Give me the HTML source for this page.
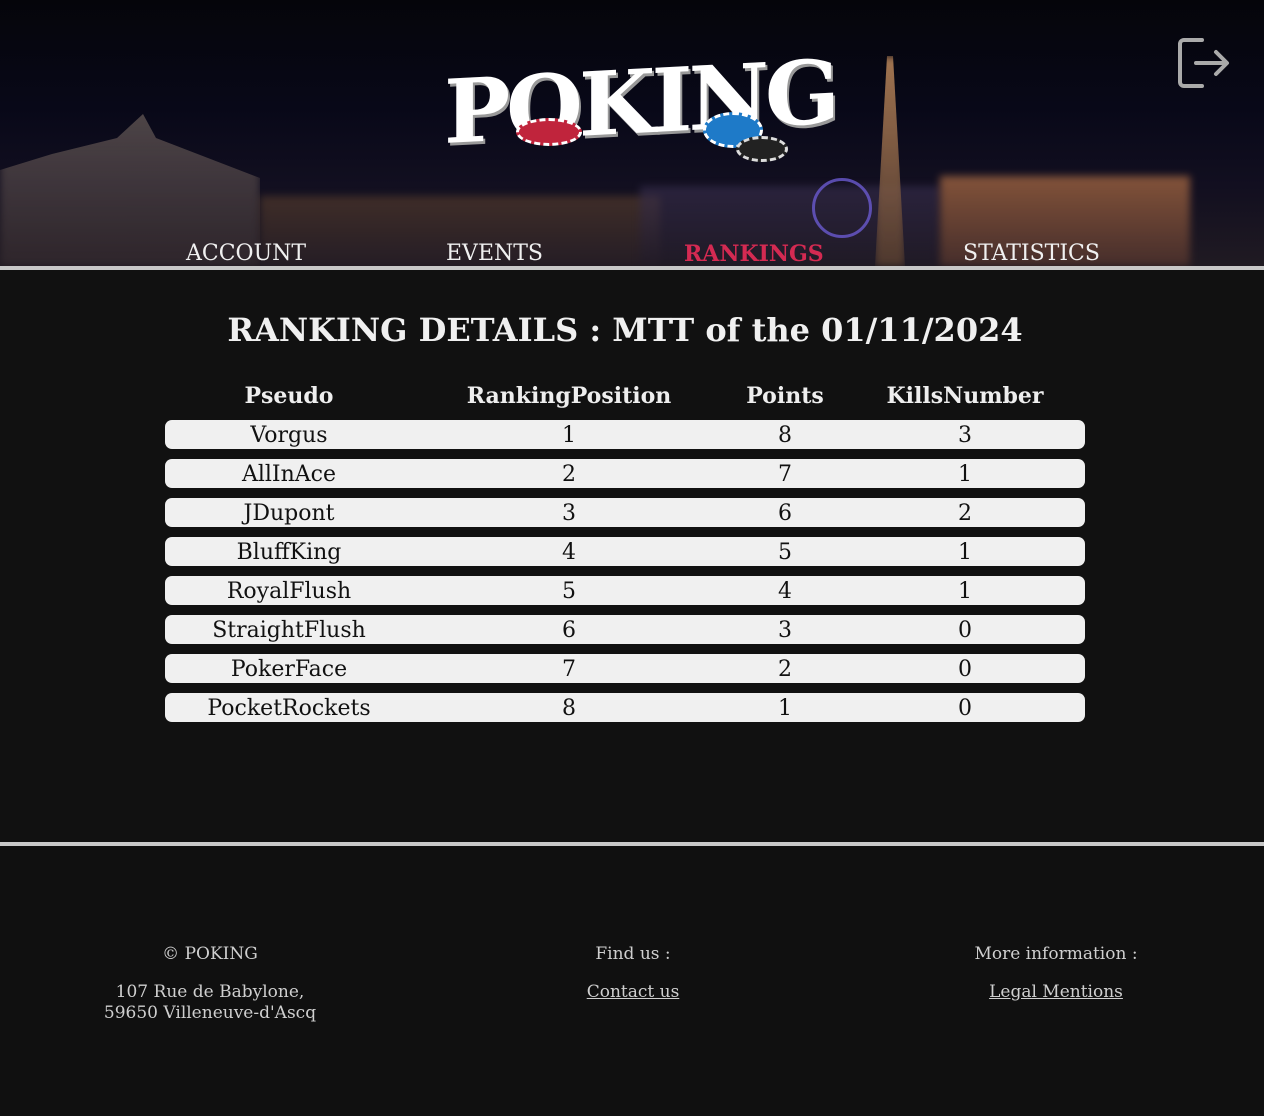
<!DOCTYPE html>
<html><head><meta charset="utf-8"><style>
*{margin:0;padding:0;box-sizing:border-box}
body{width:1264px;height:1116px;background:#101010;font-family:"DejaVu Serif","Liberation Serif",serif;color:#eee;overflow:hidden;position:relative}
header{position:absolute;left:0;top:0;width:1264px;height:266px;overflow:hidden;
background:linear-gradient(180deg,#05050a 0%,#080818 40%,#120f20 70%,#201a22 100%)}
.city{position:absolute;bottom:0;height:150px;filter:blur(4px)}
.line1{position:absolute;left:0;top:266px;width:1264px;height:4px;background:#c8c8c8}
.line2{position:absolute;left:0;top:842px;width:1264px;height:4px;background:#c8c8c8}
main{position:absolute;left:0;top:270px;width:1264px;height:572px;background:#111}
nav a{position:absolute;top:241px;font-size:22px;color:#f0f0f0;text-decoration:none}
h1{position:absolute;top:311px;left:-7px;width:1264px;text-align:center;font-size:32px;font-weight:bold;color:#f0f0f0}
.th{position:absolute;top:383px;font-size:22px;font-weight:bold;transform:translateX(-50%);white-space:nowrap}
.row{position:absolute;left:165px;width:920px;height:29px;background:#f0f0f0;border-radius:7px;color:#111;font-size:22px}
.row span{position:absolute;top:1px;line-height:29px;transform:translateX(-50%);white-space:nowrap}
.f{position:absolute;font-size:17px;color:#cfcfcf;text-align:center;transform:translateX(-50%);white-space:nowrap;line-height:21px}
.f a{color:#cfcfcf;text-decoration:underline}
</style></head><body>
<header>
<div class="city" style="left:0;width:260px;height:160px;background:linear-gradient(180deg,#8a7a70,#3a2f33);opacity:.55;clip-path:polygon(0 40%,20% 30%,45% 20%,55% 5%,60% 20%,100% 45%,100% 100%,0 100%)"></div>
<div class="city" style="left:260px;width:400px;height:70px;background:linear-gradient(180deg,#6a4a30,#2a2028);opacity:.5"></div>
<div class="city" style="left:640px;width:300px;height:80px;background:linear-gradient(180deg,#3a3050,#201a28);opacity:.6"></div>
<div class="city" style="left:875px;width:30px;height:210px;background:linear-gradient(180deg,#c89060,#5a4030);opacity:.8;clip-path:polygon(40% 0,60% 0,100% 100%,0 100%)"></div>
<div style="position:absolute;left:812px;top:178px;width:60px;height:60px;border:3px solid #6a5ad0;border-radius:50%;opacity:.8"></div>
<div class="city" style="left:940px;width:250px;height:90px;background:linear-gradient(180deg,#c07848,#5a3830);opacity:.65"></div>
<div style="position:absolute;left:444px;top:52px;width:380px;height:100px;font-family:'DejaVu Serif',serif;font-weight:bold;font-size:88px;color:#fff;letter-spacing:-4px;line-height:100px;text-shadow:2px 3px 0 #999;transform:skewY(-3deg)">POKING</div>
<div style="position:absolute;left:516px;top:118px;width:66px;height:28px;border-radius:50%;background:#c0243c;border:3px dashed #fff"></div>
<div style="position:absolute;left:703px;top:112px;width:60px;height:36px;border-radius:50%;background:#1e7ac8;border:3px dashed #fff"></div>
<div style="position:absolute;left:736px;top:136px;width:52px;height:26px;border-radius:50%;background:#222;border:3px dashed #ddd"></div>
<svg style="position:absolute;left:1176px;top:36px" width="54" height="54" viewBox="0 0 54 54" fill="none" stroke="#aaa" stroke-width="4" stroke-linecap="round" stroke-linejoin="round"><path d="M26 4H8a4 4 0 0 0-4 4v38a4 4 0 0 0 4 4h18"/><path d="M20 27h30M40 16l11 11-11 11"/></svg>
<nav><a style="left:186px">ACCOUNT</a><a style="left:446px">EVENTS</a><a style="left:684px;color:#d42a52;font-weight:bold">RANKINGS</a><a style="left:963px">STATISTICS</a></nav>
</header>
<div class="line1"></div>
<main></main>
<h1>RANKING DETAILS : MTT of the 01/11/2024</h1>
<div class="th" style="left:289px">Pseudo</div>
<div class="th" style="left:569px">RankingPosition</div>
<div class="th" style="left:785px">Points</div>
<div class="th" style="left:965px">KillsNumber</div>
<div class="row" style="top:420px"><span style="left:124px">Vorgus</span><span style="left:404px">1</span><span style="left:620px">8</span><span style="left:800px">3</span></div>
<div class="row" style="top:459px"><span style="left:124px">AllInAce</span><span style="left:404px">2</span><span style="left:620px">7</span><span style="left:800px">1</span></div>
<div class="row" style="top:498px"><span style="left:124px">JDupont</span><span style="left:404px">3</span><span style="left:620px">6</span><span style="left:800px">2</span></div>
<div class="row" style="top:537px"><span style="left:124px">BluffKing</span><span style="left:404px">4</span><span style="left:620px">5</span><span style="left:800px">1</span></div>
<div class="row" style="top:576px"><span style="left:124px">RoyalFlush</span><span style="left:404px">5</span><span style="left:620px">4</span><span style="left:800px">1</span></div>
<div class="row" style="top:615px"><span style="left:124px">StraightFlush</span><span style="left:404px">6</span><span style="left:620px">3</span><span style="left:800px">0</span></div>
<div class="row" style="top:654px"><span style="left:124px">PokerFace</span><span style="left:404px">7</span><span style="left:620px">2</span><span style="left:800px">0</span></div>
<div class="row" style="top:693px"><span style="left:124px">PocketRockets</span><span style="left:404px">8</span><span style="left:620px">1</span><span style="left:800px">0</span></div>
<div class="line2"></div>
<div class="f" style="left:210px;top:944px">© POKING</div>
<div class="f" style="left:210px;top:982px">107 Rue de Babylone,<br>59650 Villeneuve-d'Ascq</div>
<div class="f" style="left:633px;top:944px">Find us :</div>
<div class="f" style="left:633px;top:982px"><a>Contact us</a></div>
<div class="f" style="left:1056px;top:944px">More information :</div>
<div class="f" style="left:1056px;top:982px"><a>Legal Mentions</a></div>
</body></html>
